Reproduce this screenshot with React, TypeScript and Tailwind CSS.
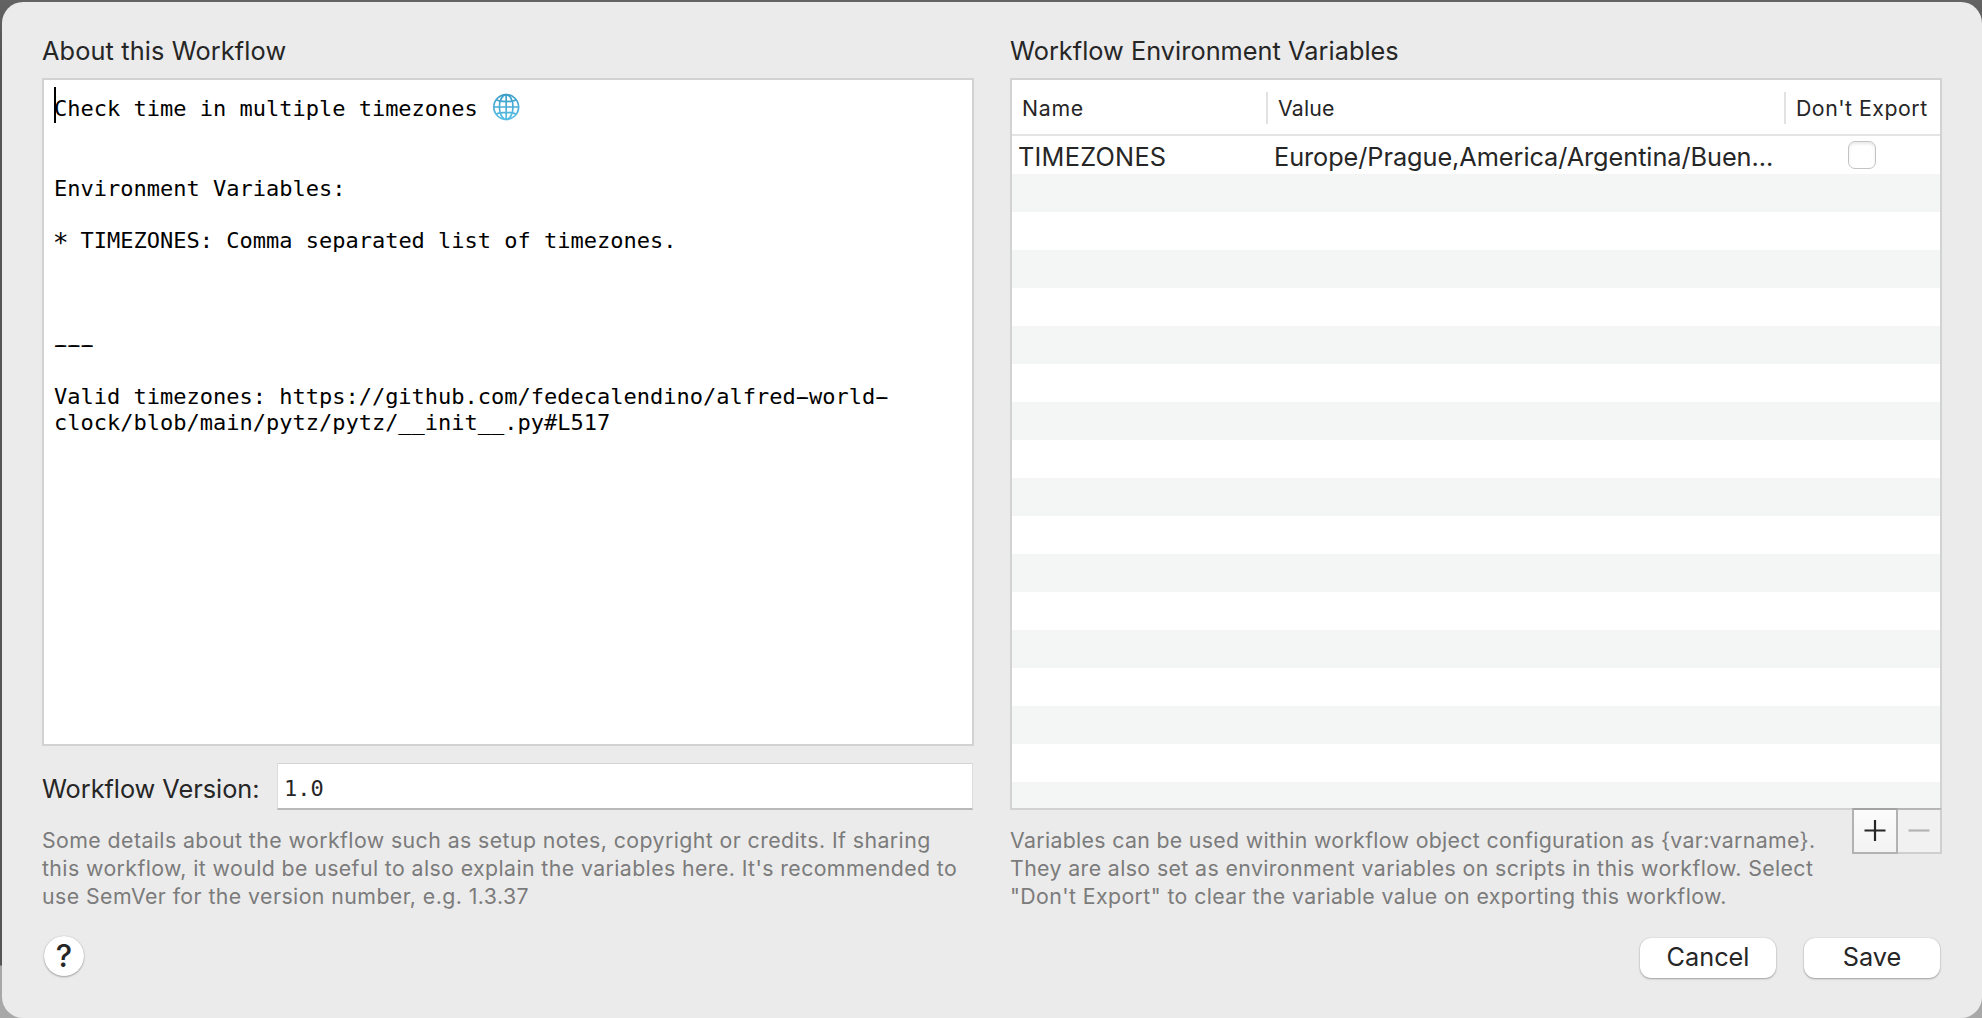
import type { ReactNode } from 'react';

const STRIPES = Array.from({ length: 16 }, (_, i) => i);

function Globe() {
  return (
    <svg
      viewBox="0 0 28 28"
      className="ml-px inline-block h-[28px] w-[28px] align-[-5px]"
      fill="none"
      stroke="url(#globe-ink)"
      strokeWidth="1.7"
    >
      <defs>
        <linearGradient id="globe-ink" x1="0" y1="0" x2="0" y2="28" gradientUnits="userSpaceOnUse">
          <stop offset="0" stopColor="#3b9cc4" />
          <stop offset="0.5" stopColor="#4aaed6" />
          <stop offset="1" stopColor="#5cc0e6" />
        </linearGradient>
      </defs>
      <circle cx="14.2" cy="14" r="12.4" />
      <ellipse cx="14.2" cy="14" rx="6.8" ry="12.4" />
      <path d="M14.2 1.6v24.8M1.8 14.01h24.8M4.2 6.8c2 1.2 5.8 1.8 10 1.8s8-.6 10-1.8M4.2 21.2c2-1.2 5.8-1.8 10-1.8s8 .6 10 1.8" />
    </svg>
  );
}

// Hyphens widened to nearly fill their monospace cells.
function Dash({ children }: { children: ReactNode }) {
  return <span className="[text-shadow:-2.7px_0_0_currentColor,2.7px_0_0_currentColor]">{children}</span>;
}

function NotesEditor() {
  return (
    <div className="h-[668px] w-[932px] border-2 border-[#d2d2d2] bg-white pt-[14px] pl-[10px] font-['DejaVu_Sans_Mono',monospace] text-[22px] leading-[26px] text-black">
      <div className="relative h-[28px]">
        <span className="absolute top-[-6px] left-0 h-[36px] w-[2px] bg-black" />
        <div className="-mt-px h-[28px] leading-[28px] whitespace-pre">
          Check time in multiple timezones <Globe />
        </div>
      </div>
      <div className="mt-[55px] whitespace-pre">Environment Variables:</div>
      <div className="mt-[26px] whitespace-pre">
        <span className="inline-block translate-y-[3px] scale-120">*</span> TIMEZONES: Comma separated list of timezones.
      </div>
      <div className="mt-[78px]">
        <Dash>---</Dash>
      </div>
      <div className="mt-[26px] whitespace-pre">
        Valid timezones: https://github.com/fedecalendino/alfred
        <Dash>-</Dash>
        world
        <Dash>-</Dash>
      </div>
      <div>clock/blob/main/pytz/pytz/__init__.py#L517</div>
    </div>
  );
}

function VariablesTable() {
  return (
    <div className="flex h-[732px] w-[932px] flex-col overflow-hidden border-2 border-[#d2d2d2] bg-white">
      <div className="flex h-[56px] shrink-0 items-start border-b-2 border-[#e4e4e4] pt-[12px] text-[21.3px] leading-[32px]">
        <div className="w-[254px] pl-[10px] tracking-[0.7px]">Name</div>
        <div className="w-[518px] border-l-2 border-[#e2e2e2] pl-[10px] tracking-[0.2px]">Value</div>
        <div className="flex-1 border-l-2 border-[#e2e2e2] pl-[10px] tracking-[0.5px] whitespace-nowrap">
          Don't Export
        </div>
      </div>
      <div className="flex h-[38px] shrink-0 items-start text-[25.3px] leading-[41px]">
        <div className="w-[262px] pl-[6px] tracking-[0.25px]">TIMEZONES</div>
        <div className="w-[574px] tracking-[-0.06px] whitespace-nowrap">Europe/Prague,America/Argentina/Buen...</div>
        <div className="mt-[5px] h-[28px] w-[28px] rounded-[7px] border border-[#c4c4c4] bg-white shadow-[inset_0_2px_3px_rgba(0,0,0,0.09)]" />
      </div>
      <div className="shrink-0">
        {STRIPES.map((i) => (
          <div key={i} className="h-[38px] odd:bg-[#f4f5f5] even:bg-white" />
        ))}
        <div className="h-[26px] bg-[#f4f5f5]" />
      </div>
    </div>
  );
}

function PushButton({ children }: { children: ReactNode }) {
  return (
    <button className="flex h-[40px] w-[136px] items-start justify-center rounded-[11px] bg-white text-[25.3px] leading-[37px] text-[#262626] shadow-[0_0_1px_rgba(0,0,0,0.25),0_1px_2px_rgba(0,0,0,0.3)]">
      {children}
    </button>
  );
}

export default function App() {
  return (
    <div className="h-[1018px] w-[1982px] overflow-hidden bg-[linear-gradient(to_bottom,#636363_0px,#555555_60px,#555555_965px,#a8a8a8_966px,#a8a8a8_1018px)] pt-[2px] pl-[2px] font-[Inter,sans-serif] text-[#262626]">
      <div className="flex h-[1016px] w-[1980px] flex-col rounded-[21px] bg-[#ebebeb] pt-[33px] pr-[40px] pl-[40px]">
        <div className="flex justify-between">
          <section className="w-[932px]">
            <h2 className="mb-[11px] h-[32px] text-[25.3px] leading-[32px] tracking-[0.13px]">About this Workflow</h2>
            <NotesEditor />
            <div className="mt-[17px] flex h-[47px]">
              <div className="w-[235px] pt-[10px] text-[25.3px] leading-[32px] tracking-[-0.03px]">Workflow Version:</div>
              <div className="h-[47px] w-[696px] border-t border-r border-b-2 border-l border-t-[#d4d4d4] border-r-[#dcdcdc] border-b-[#b9b9b9] border-l-[#dcdcdc] bg-white pt-[12px] pl-[6px] font-['DejaVu_Sans_Mono',monospace] text-[22px] leading-[26px]">
                1.0
              </div>
            </div>
            <div className="mt-[16px] text-[21.3px] leading-[28px] whitespace-nowrap text-[#7b7b7b]">
              <div className="tracking-[0.42px]">
                Some details about the workflow such as setup notes, copyright or credits. If sharing
              </div>
              <div className="tracking-[0.4px]">
                this workflow, it would be useful to also explain the variables here. It's recommended to
              </div>
              <div className="tracking-[0.43px]">use SemVer for the version number, e.g. 1.3.37</div>
            </div>
          </section>

          <section className="w-[932px]">
            <h2 className="mb-[11px] h-[32px] text-[25.3px] leading-[32px] tracking-[0.04px]">
              Workflow Environment Variables
            </h2>
            <VariablesTable />
            <div className="flex justify-between">
              <div className="mt-[16px] text-[21.3px] leading-[28px] whitespace-nowrap text-[#7b7b7b]">
                <div className="tracking-[0.33px]">
                  Variables can be used within workflow object configuration as {'{var:varname}'}.
                </div>
                <div className="tracking-[0.39px]">
                  They are also set as environment variables on scripts in this workflow. Select
                </div>
                <div className="tracking-[0.4px]">
                  "Don't Export" to clear the variable value on exporting this workflow.
                </div>
              </div>
              <div className="relative -mt-[2px] flex h-[46px]">
                <button className="flex h-[46px] w-[46px] items-center justify-center border-2 border-[#b2b2b2] border-t-[#a3a3a3] bg-linear-to-b from-[#fbfbfb] to-[#f3f3f3]">
                  <svg viewBox="0 0 22 22" className="h-[22px] w-[22px]" stroke="#262626" strokeWidth="2.2">
                    <path d="M.5 10.5h21M11 0v21" />
                  </svg>
                </button>
                <button className="flex h-[46px] w-[44px] items-center justify-center border-t-2 border-r-2 border-b-2 border-[#cfcfcf] border-t-[#b6b6b6] bg-[#f1f1f1]">
                  <svg viewBox="0 0 22 22" className="h-[22px] w-[22px]" stroke="#b4b4b4" strokeWidth="2.2">
                    <path d="M.5 10.5h21" />
                  </svg>
                </button>
              </div>
            </div>
          </section>
        </div>

        <div className="mt-[26px] flex items-start justify-between pr-[2px] pl-[2px]">
          <button className="h-[40px] w-[40px] rounded-full bg-white text-center text-[31px] leading-[40px] font-medium shadow-[0_0_1px_rgba(0,0,0,0.25),0_1px_2px_rgba(0,0,0,0.3)]">
            ?
          </button>
          <div className="mt-[2px] flex gap-[28px]">
            <PushButton>Cancel</PushButton>
            <PushButton>Save</PushButton>
          </div>
        </div>
      </div>
    </div>
  );
}
